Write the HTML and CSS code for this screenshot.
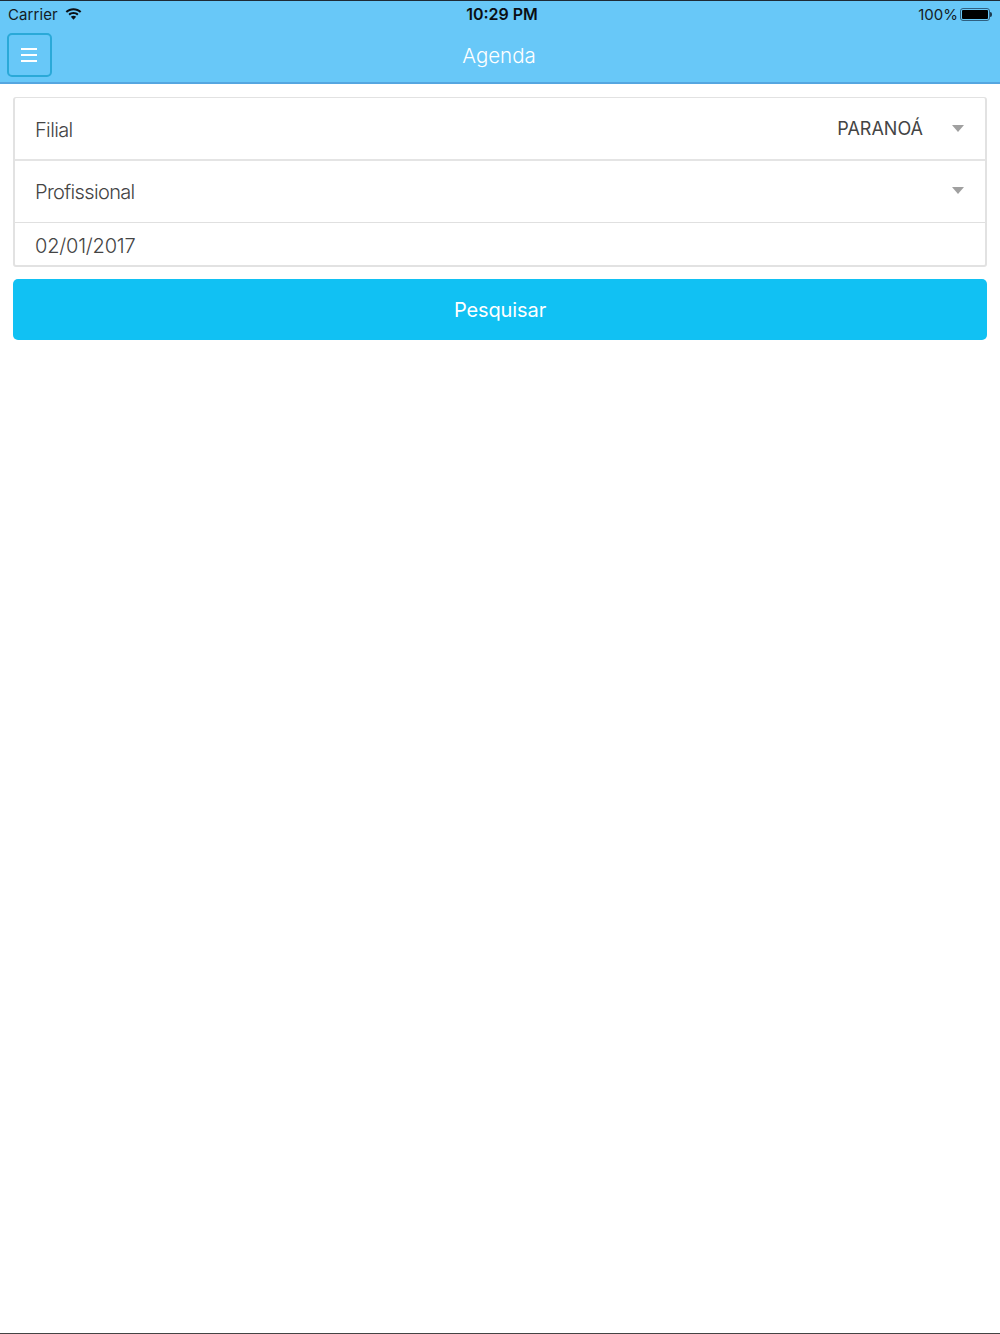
FILE: index.html
```html
<!DOCTYPE html>
<html lang="pt">
<head>
  <meta charset="UTF-8" />
  <meta name="viewport" content="width=device-width, initial-scale=1.0"/>
  <title>Agenda</title>
  <link rel="stylesheet" href="styles.css">
</head>
<body>
  <header class="topo">
    <div class="status">
      <div class="status-esq">
        <span>Carrier</span>
        <svg class="wifi" width="17" height="13" viewBox="0 0 16 12">
          <path d="M8 1C5.2 1 2.6 2 .6 3.8l1.3 1.4C3.5 3.7 5.7 2.9 8 2.9s4.5.8 6.1 2.3l1.3-1.4C13.4 2 10.8 1 8 1z" fill="#0b0f14"/>
          <path d="M8 4.6c-1.8 0-3.4.7-4.7 1.8l1.3 1.4C5.5 7 6.7 6.5 8 6.5s2.5.5 3.4 1.3l1.3-1.4C11.4 5.3 9.8 4.6 8 4.6z" fill="#0b0f14"/>
          <path d="M5.5 9.1 8 11.8l2.5-2.7C9.8 8.5 8.9 8.2 8 8.2s-1.8.3-2.5.9z" fill="#0b0f14"/>
        </svg>
      </div>
      <div class="status-hora">10:29 PM</div>
      <div class="status-dir">
        <span>100%</span>
        <div class="bateria"><div class="bateria-carga"></div></div>
        <div class="bateria-ponta"></div>
      </div>
    </div>
    <div class="barra">
      <button class="menu" type="button" aria-label="Menu">
        <span></span><span></span><span></span>
      </button>
      <h1>Agenda</h1>
    </div>
  </header>

  <main class="conteudo">
    <div class="lista">
      <div class="item item-filial">
        <span class="rotulo">Filial</span>
        <span class="valor">PARANOÁ</span>
        <span class="seta"></span>
      </div>
      <div class="item item-prof">
        <span class="rotulo">Profissional</span>
        <span class="seta"></span>
      </div>
      <div class="item item-data">
        <span class="rotulo rotulo-data">02/01/2017</span>
      </div>
    </div>
    <button class="pesquisar" type="button">Pesquisar</button>
  </main>
</body>
</html>
```

FILE: styles.css
```css
* { box-sizing: border-box; }
html, body { height: 100%; }
body {
  margin: 0;
  height: 1334px;
  display: flex;
  flex-direction: column;
  background: #ffffff;
  font-family: 'Inter', 'Roboto', sans-serif;
  border-bottom: 1px solid #444;
  overflow: hidden;
}
.topo {
  height: 84px;
  background: #68c8f8;
  border-top: 1px solid #1e2b36;
  border-bottom: 2px solid #55a6e0;
}
.status {
  height: 27px;
  padding: 0 8px;
  display: grid;
  grid-template-columns: 1fr auto 1fr;
  align-items: center;
  font-size: 15px;
  color: #141c24;
}
.status-esq {
  display: flex;
  align-items: center;
  gap: 7px;
  letter-spacing: 0.1px;
}
.wifi { margin-top: -3px; }
.status-hora {
  margin-top: -2px;
  font-size: 16px;
  font-weight: 600;
  color: #0b0f14;
  padding-left: 4px;
}
.status-dir {
  display: flex;
  align-items: center;
  justify-content: flex-end;
}
.bateria {
  width: 30px;
  height: 13px;
  margin-left: 2px;
  padding: 1px;
  border: 1px solid #2f5f80;
  border-radius: 3px;
}
.bateria-carga {
  height: 100%;
  background: #000;
  border-radius: 1px;
}
.bateria-ponta {
  width: 2px;
  height: 5px;
  background: #1c3a50;
  border-radius: 0 2px 2px 0;
}
.barra {
  height: 54px;
  padding: 5px 7px 5px;
  display: flex;
  align-items: center;
  position: relative;
}
.menu {
  width: 45px;
  height: 44px;
  padding: 0 2px 0 0;
  background: transparent;
  border: 2px solid #2aa9d8;
  border-radius: 5px;
  display: flex;
  flex-direction: column;
  align-items: center;
  justify-content: center;
  gap: 4px;
}
.menu span {
  display: block;
  width: 16px;
  height: 2px;
  background: #ffffff;
}
.barra h1 {
  position: absolute;
  left: 0;
  right: 2px;
  margin: 0;
  text-align: center;
  font-size: 20.5px;
  font-weight: 300;
  color: #ffffff;
  pointer-events: none;
}
.conteudo {
  padding: 13px 13px 0;
}
.lista {
  border: 2px solid #e2e2e2;
  border-width: 1px 2px 2px 2px;
  border-radius: 3px;
}
.item {
  display: flex;
  align-items: center;
  padding: 0 21px 0 20px;
  color: #555;
}
.item-filial {
  height: 63px;
  border-bottom: 2px solid #e4e4e4;
}
.item-prof {
  height: 62px;
  border-bottom: 1px solid #e0e0e0;
}
.item-data { height: 42px; }
.rotulo {
  flex: 1;
  margin-top: 2px;
  font-size: 20px;
  font-weight: 300;
  letter-spacing: -0.65px;
  color: #444;
}
.item-prof .rotulo { margin-top: 0; }
.rotulo-data {
  margin-top: 4px;
  letter-spacing: -0.2px;
}
.valor {
  font-size: 18px;
  font-weight: 400;
  color: #444;
  margin-bottom: 1px;
  margin-right: 29px;
}
.seta {
  width: 0;
  height: 0;
  margin-bottom: 3px;
  border-left: 6.5px solid transparent;
  border-right: 6.5px solid transparent;
  border-top: 7px solid #a0a0a0;
}
.item-filial .seta { margin-bottom: 1px; }
.pesquisar {
  display: block;
  width: 100%;
  height: 61px;
  margin-top: 12px;
  background: #11c1f3;
  border: none;
  border-radius: 5px;
  color: #ffffff;
  font-family: inherit;
  font-size: 20px;
  font-weight: 400;
  letter-spacing: -0.1px;
}
```
